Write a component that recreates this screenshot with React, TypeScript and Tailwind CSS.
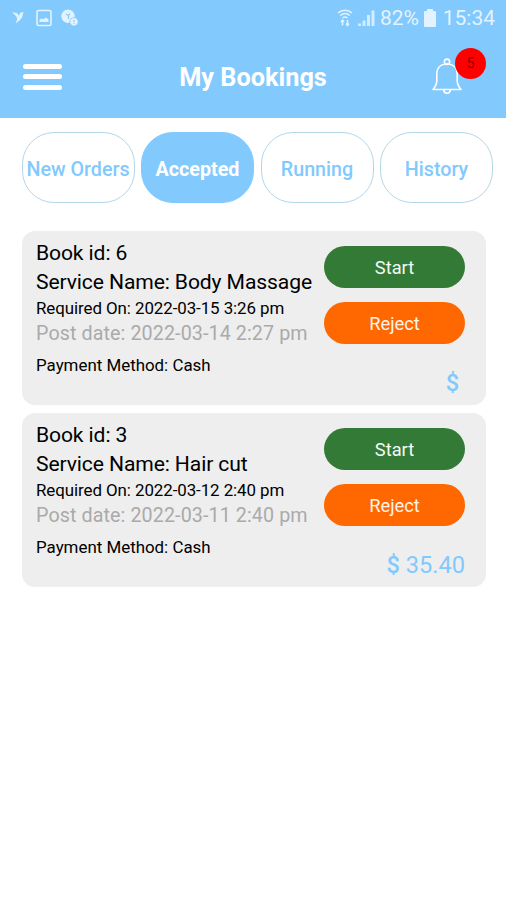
import React, { useState } from 'react';

interface Booking {
  id: number;
  service: string;
  requiredOn: string;
  postDate: string;
  payment: string;
  price: string;
}

const bookings: Booking[] = [
  {
    id: 6,
    service: 'Body Massage',
    requiredOn: '2022-03-15 3:26 pm',
    postDate: '2022-03-14 2:27 pm',
    payment: 'Cash',
    price: '',
  },
  {
    id: 3,
    service: 'Hair cut',
    requiredOn: '2022-03-12 2:40 pm',
    postDate: '2022-03-11 2:40 pm',
    payment: 'Cash',
    price: '35.40',
  },
];

const tabs = ['New Orders', 'Accepted', 'Running', 'History'];

const StatusBar: React.FC = () => (
  <div className="flex h-9 items-center pl-3 pr-[11px] text-[21px] text-[#e2f3ff]">
    {/* Notifications */}
    <svg className="h-[14px] w-[12px]" viewBox="0 0 12 14" fill="currentColor">
      <path d="M0 1.2 4.8 2 7 4.8 8 2 11.5 .8 10 6.5 7.5 9.5 3.5 12.5 5.2 8.5 4.5 5.5Z" />
    </svg>
    <svg className="ml-3 h-[18px] w-[16px]" viewBox="0 0 16 18" fill="none" stroke="currentColor">
      <rect x="1" y="1.5" width="14" height="15" rx="1.5" strokeWidth="1.6" />
      <path d="M3.5 13V10.5l2-1 2 .8 2-1.8 3 1.8V13Z" fill="currentColor" stroke="none" />
    </svg>
    <svg className="ml-[9px] h-[18px] w-[18px]" viewBox="0 0 18 18">
      <circle cx="7" cy="7.3" r="6.7" fill="currentColor" />
      <path d="m5 5 2.5 1.5V10M7.5 6.5l1.5-2" stroke="#82c9fd" strokeWidth="1.2" fill="none" />
      <circle cx="13" cy="12.8" r="4.2" fill="currentColor" stroke="#82c9fd" strokeWidth=".8" />
      <path d="M13 10.5v2.7M13 14v1" stroke="#82c9fd" />
    </svg>

    {/* Connectivity, battery and clock */}
    <svg className="ml-auto h-[18px] w-[16px]" viewBox="0 0 16 18" fill="none" stroke="currentColor" strokeWidth="1.5">
      <path d="M1 4C5 .4 11 .4 15 4M3.2 6.5c3-2.6 6.6-2.6 9.6 0M5.5 9c1.6-1.3 3.4-1.3 5 0" />
      <path d="M5.5 11v5.5M4 13l1.5-2L7 13M10.5 11v5.5M9 14.5l1.5 2 1.5-2" />
    </svg>
    <svg className="ml-[5px] h-[18px] w-[17px]" viewBox="0 0 17 18" fill="currentColor">
      <path d="M0 14.5h3V17H0ZM4.5 11.5h3V17h-3ZM9 6h3v11H9ZM13.5 1.5h3V17h-3Z" opacity=".85" />
    </svg>
    <span className="ml-[5px] w-[41px] whitespace-nowrap pt-[2px]">82%</span>
    <svg className="ml-[3px] h-[18px] w-[12px]" viewBox="0 0 12 18" fill="currentColor">
      <path d="M3 0h6v2h2q1 0 1 1v14q0 1-1 1H1q-1 0-1-1V3q0-1 1-1h2Z" />
    </svg>
    <span className="ml-[6px] w-[53px] whitespace-nowrap pt-[2px] text-right">15:34</span>
  </div>
);

const Header: React.FC<{ count: number }> = ({ count }) => (
  <header className="h-[118px] bg-[#82c9fd]">
    <StatusBar />
    <div className="grid h-[82px] grid-cols-[1fr_auto_1fr] items-center">
      <button className="mb-px ml-[23px] flex w-[39px] flex-col gap-[5.5px]">
        <span className="h-[5px] w-full rounded-sm bg-white" />
        <span className="h-[5px] w-full rounded-sm bg-white" />
        <span className="h-[5px] w-full rounded-sm bg-white" />
      </button>
      <h1 className="pt-[2px] text-[25.3px] font-bold text-white">My Bookings</h1>
      <div className="relative mb-px mr-[44px] justify-self-end">
        <svg className="h-[37px] w-[30px]" viewBox="0 0 30 37" fill="none" stroke="white" strokeWidth="1.6">
          <circle cx="15" cy="3.8" r="2.7" />
          <path d="M15 6C8.5 6 4.8 10 4.8 16v7c0 3.5-1.3 5.5-3.8 8.5h28c-2.5-3-3.8-5-3.8-8.5v-7c0-6-3.7-10-10.2-10Z" strokeLinejoin="round" />
          <path d="M11.8 32a3.2 3.2 0 0 0 6.4 0" />
        </svg>
        <span className="absolute -right-[24px] -top-[10px] flex size-[31px] items-center justify-center rounded-full bg-[#fe0000] text-[14px] text-[#8a0000]">
          {count}
        </span>
      </div>
    </div>
  </header>
);

const BookingCard: React.FC<{ booking: Booking }> = ({ booking }) => (
  <div className="flex h-[174px] justify-between rounded-[13px] bg-[#eeeeee] pl-[14px] pr-[21px]">
    <div className="whitespace-nowrap pt-[7px] text-black">
      <p className="text-[21.1px] leading-[29px] tracking-[-0.11px]">Book id: {booking.id}</p>
      <p className="text-[21.1px] leading-[29px] tracking-[-0.11px]">Service Name: {booking.service}</p>
      <p className="mt-px text-[16.9px] leading-[23px] tracking-[-0.07px]">Required On: {booking.requiredOn}</p>
      <p className="text-[19.7px] leading-[27px] tracking-[0.1px] text-[#aaaaaa]">Post date: {booking.postDate}</p>
      <p className="mt-[7px] text-[16.9px] leading-[23px]">Payment Method: {booking.payment}</p>
    </div>
    <div className="flex w-[141px] shrink-0 flex-col pt-[15px]">
      <button className="h-[42px] rounded-full bg-[#337a36] pt-[2px] text-[18.3px] text-[#f4faf4]">Start</button>
      <button className="mt-[14px] h-[42px] rounded-full bg-[#ff6800] pt-[2px] text-[18.3px] text-[#fff3e8]">Reject</button>
      <p className="mt-6 whitespace-pre text-right text-[23.6px] leading-[30px] text-[#82c9fd]">
        <span className="font-medium">$</span> {booking.price}
      </p>
    </div>
  </div>
);

const App: React.FC = () => {
  const [activeTab, setActiveTab] = useState('Accepted');

  return (
    <div className="min-h-screen bg-white font-[Roboto,sans-serif]">
      <Header count={5} />

      {/* Tabs */}
      <nav className="flex gap-[6.5px] pl-[21.5px] pt-[14px]">
        {tabs.map(tab => (
          <button
            key={tab}
            onClick={() => setActiveTab(tab)}
            className={`h-[71px] w-[113px] shrink-0 whitespace-nowrap rounded-[32px] border pt-[5px] text-[19.7px] ${
              tab === activeTab
                ? 'border-[#82c9fd] bg-[#82c9fd] font-bold text-white'
                : 'border-[#b4d7e8] font-medium text-[#82c9fd]'
            }`}
          >
            {tab}
          </button>
        ))}
      </nav>

      {/* Bookings */}
      <main className="flex flex-col gap-2 pl-[22px] pr-5 pt-7">
        {bookings.map(booking => (
          <BookingCard key={booking.id} booking={booking} />
        ))}
      </main>
    </div>
  );
};

export default App;
